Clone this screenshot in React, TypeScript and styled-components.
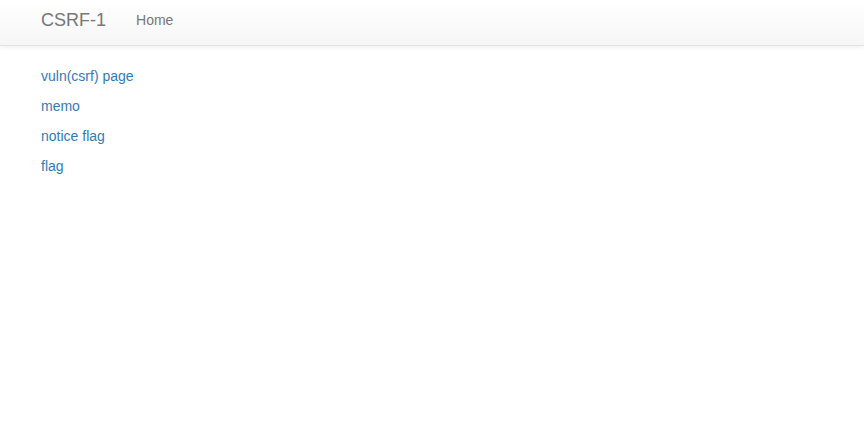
import React, { FC } from "react"
import styled, { createGlobalStyle } from "styled-components"

const GlobalStyle = createGlobalStyle`
  body {
    margin: 0;
    background: #fff;
    font-family: "Liberation Sans", Arial, Helvetica, sans-serif;
    font-size: 14px;
    line-height: 1.42857;
    color: #333;
  }
`

const Navbar = styled.nav`
  height: 45px;
  border-bottom: 1px solid #e3e3e3;
  background-image: linear-gradient(to bottom, #fff 0, #f6f6f6 100%);
  box-shadow: 0 1px 5px rgba(0, 0, 0, 0.075);
  display: flex;
  align-items: center;
  padding: 0 41px;
`

const Brand = styled.a`
  font-size: 18px;
  color: #777;
  text-decoration: none;
  margin-right: 30px;
  margin-top: -4px;
`

const NavLink = styled.a`
  font-size: 14px;
  color: #777;
  text-decoration: none;
  margin-top: -4px;
`

const Content = styled.div`
  padding: 20px 41px;
  display: flex;
  flex-direction: column;
  gap: 10px;
`

const Item = styled.a`
  color: #337ab7;
  text-decoration: none;
  line-height: 20px;
  align-self: flex-start;
`

const App: FC = () => {
  return (
    <>
      <GlobalStyle />
      <Navbar>
        <Brand href="#">CSRF-1</Brand>
        <NavLink href="#">Home</NavLink>
      </Navbar>
      <Content>
        <Item href="#">vuln(csrf) page</Item>
        <Item href="#">memo</Item>
        <Item href="#">notice flag</Item>
        <Item href="#">flag</Item>
      </Content>
    </>
  )
}
export default App
